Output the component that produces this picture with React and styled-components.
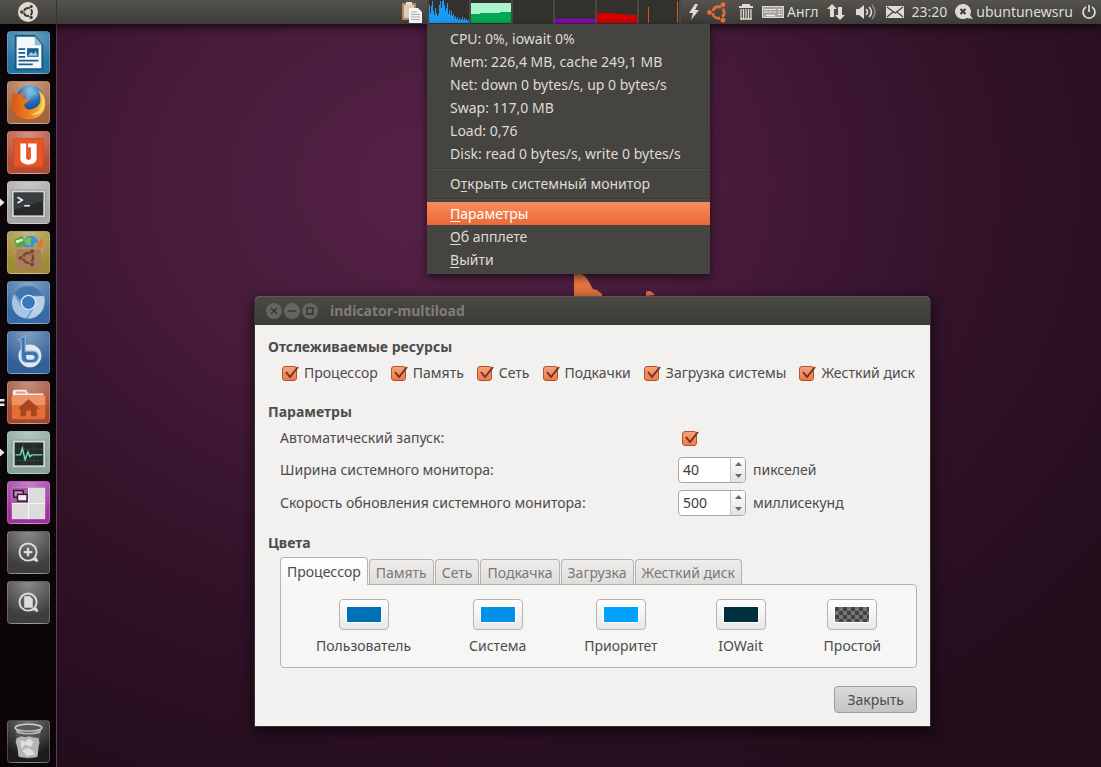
import React, { useState } from "react";
import styled, { createGlobalStyle, css } from "styled-components";

const cpuLoad = [18, 10, 17, 22, 12, 8, 15, 10, 7, 9, 18, 22, 15, 22, 23, 18, 12, 15, 20, 9, 13, 8, 12, 7, 9, 5, 7, 4, 6, 3, 5, 3, 4, 6, 3, 5, 3, 4, 2, 3];

const stats = [
  "CPU: 0%, iowait 0%",
  "Mem: 226,4 MB, cache 249,1 MB",
  "Net: down 0 bytes/s, up 0 bytes/s",
  "Swap: 117,0 MB",
  "Load: 0,76",
  "Disk: read 0 bytes/s, write 0 bytes/s",
];

const resources = ["Процессор", "Память", "Сеть", "Подкачки", "Загрузка системы", "Жесткий диск"];
const tabs = ["Процессор", "Память", "Сеть", "Подкачка", "Загрузка", "Жесткий диск"];

const colors = [
  { id: "user", name: "Пользователь", color: "#0071b5" },
  { id: "system", name: "Система", color: "#0390e8" },
  { id: "nice", name: "Приоритет", color: "#00a1ff" },
  { id: "iowait", name: "IOWait", color: "#002f3d" },
  { id: "idle", name: "Простой", color: "" },
];

/* ---------- launcher drawings ---------- */

const Friends = ({ fill, ring }) => (
  <g>
    <circle cx="12" cy="12" r="6" fill="none" stroke={ring || fill} strokeWidth="3" strokeDasharray="10.4 2.166" strokeDashoffset="-7.366" />
    <circle cx="2.600" cy="12" r="2.500" fill={fill} />
    <circle cx="16.700" cy="3.900" r="2.500" fill={fill} />
    <circle cx="16.700" cy="20.100" r="2.500" fill={fill} />
  </g>
);

const WriterIcon = () => (
  <svg viewBox="0 0 43 43">
    <path d="M8 4h20l8 10v25H8z" fill="#f4f8fa" stroke="#155a86" strokeWidth="2" />
    <path d="M28 4l8 10h-8z" fill="#8db9d2" />
    <path d="M11 18h7M11 22h7M11 26h7M11 30h21M11 34h15" stroke="#195f8d" strokeWidth="1.8" />
    <rect x="20" y="17" width="12" height="9" fill="#195f8d" />
    <path d="M21 25l3-4 3 2 2-3 2 5z" fill="#9fcbe0" />
  </svg>
);

const FirefoxIcon = () => (
  <svg viewBox="0 0 43 43">
    <defs>
      <radialGradient id="globe" cx=".5" cy=".2" r=".8">
        <stop offset="0" stopColor="#8fd0ee" />
        <stop offset=".5" stopColor="#2b6fb8" />
        <stop offset="1" stopColor="#123a7c" />
      </radialGradient>
      <linearGradient id="fox" x1="0" x2="1">
        <stop offset="0" stopColor="#dc5416" />
        <stop offset=".6" stopColor="#ee8a22" />
        <stop offset="1" stopColor="#f8cf45" />
      </linearGradient>
    </defs>
    <circle cx="23" cy="18" r="14.500" fill="url(#globe)" />
    <path d="M22 6c4 0 3 3 7 4s1 4-2 4-5 2-4 4-4 1-3-3z" fill="#7eb7d9" opacity=".6" />
    <path d="M6 10c1 2 3 3 5 3 3-2 6-1 7-1-2 2-3 3-2 5 3 0 6 1 6 2s-3 3-5 4c0 5 5 7 9 5 5-1 8-5 8-9 0-5-1-8-3-11 6 3 8 9 8 15 0 9-7 16-17 16C11 39 4 32 4 23c0-5 0-9 2-13z" fill="url(#fox)" />
    <path d="M33 10c6 5 7 13 3 19-3 5-8 6-13 5 9-1 13-7 13-13 0-5-1-8-3-11z" fill="#fae072" opacity=".8" />
  </svg>
);

const UbuntuOneIcon = () => (
  <svg viewBox="0 0 43 43">
    <rect x="6" y="7" width="31" height="30" rx="1" fill="#e95626" stroke="#c64c28" />
    <path d="M13 12h6v15c0 3 5 3 5 0V16h-3v-4h9v16c0 8-17 8-17 0z" fill="#fff" />
  </svg>
);

const TerminalIcon = () => (
  <svg viewBox="0 0 43 43">
    <rect x="3.500" y="8.500" width="36" height="29" rx="1" fill="#d7d7d7" stroke="#8f8f8f" />
    <rect x="6" y="11" width="31" height="24" fill="#272a2a" />
    <path d="M6 11h31v9L6 29z" fill="#43464a" opacity=".7" />
    <path d="M10 16l5 3-5 3M17 25h6" fill="none" stroke="#f4f4f4" strokeWidth="1.6" />
  </svg>
);

const SoftwareIcon = () => (
  <svg viewBox="0 0 43 43">
    <path d="M6 8l9-4 4 10-10 3z" fill="#59a33d" />
    <path d="M8 9l7-2 1 2-7 3z" fill="#e6efce" />
    <circle cx="24" cy="12" r="8" fill="#4192d4" />
    <path d="M20 6c4-1 6 1 4 3s2 4-1 5-5-2-6-5zM29 11l3 1-2 5-4-1z" fill="#74c152" />
    <path d="M34 7l4 2-5 9h-5z" fill="#e5752c" />
    <path d="M8 16h27v23H8z" fill="#a97d5a" />
    <path d="M6 22l3-6h26l3 6-3 1-1-5H9l-1 5z" fill="#bd946f" />
    <g transform="translate(11 17) scale(.85)"><Friends fill="#77482f" /></g>
  </svg>
);

const ChromiumIcon = () => (
  <svg viewBox="0 0 43 43">
    <circle cx="21.500" cy="21.500" r="17" fill="#6c9ed0" />
    <path d="M21 4.500a17 17 0 0 1 16 10H21c-5 0-7 3-7 6L7 12c3-5 8-7.500 14-7.500z" fill="#4176b1" />
    <path d="M38 15c2 11-4 23-17 23.500l7-13c2-4 1-8-2-10.500z" fill="#b9cfe4" />
    <path d="M6 13l8 13c2 3 5 4 10 4l-5 8C7 37 1 25 6 13z" fill="#a5c5e3" />
    <circle cx="21.500" cy="21.500" r="7.500" fill="#3a78be" stroke="#dce9f4" strokeWidth="1.500" />
  </svg>
);

const BlueIcon = () => (
  <svg viewBox="0 0 43 43">
    <circle cx="23" cy="25" r="12" fill="#e2e7ec" />
    <path d="M11 8l7-4v16h8c8 0 8 12 0 12h-6c-6 0-6-4-6-10V9z" fill="#3c73b0" stroke="#91b5dc" strokeWidth="1.200" />
    <path d="M19 24h6c4 0 4 5 0 5h-3c-3 0-3-1-3-5z" fill="#e2e7ec" />
  </svg>
);

const HomeIcon = () => (
  <svg viewBox="0 0 43 43">
    <path d="M5 10c0-1 1-2 2-2h12l2 4h16v7H5z" fill="#f5eee9" />
    <path d="M8 10h10l1 2H8z" fill="#d8a084" />
    <path d="M4 16c0-1 1-2 2-2h31c1 0 2 1 2 2v20c0 2-1 3-2 3H6c-1 0-2-1-2-3z" fill="#e76c35" />
    <path d="M4 16c0-1 1-2 2-2h31c1 0 2 1 2 2v8H4z" fill="#ef9267" />
    <path d="M21.500 18L33 28h-3v8h-6v-6h-5v6h-6v-8h-3z" fill="#a94521" />
  </svg>
);

const MonitorIcon = () => (
  <svg viewBox="0 0 43 43">
    <rect x="4.500" y="8.500" width="35" height="29" rx="1" fill="#d5d7d6" stroke="#899994" />
    <rect x="7" y="11" width="30" height="24" fill="#232c2b" />
    <path d="M7 18h30M7 30h30M16 11v24M27 11v24" stroke="#33423f" />
    <path d="M8 24h5l2-7 3 12 3-8 2 5 2-2h11" fill="none" stroke="#75dbb9" strokeWidth="1.500" />
  </svg>
);

const WorkspaceIcon = () => (
  <svg viewBox="0 0 43 43">
    <rect x="4" y="6" width="35" height="33" fill="#dcdcdc" />
    <rect x="4" y="6" width="17" height="16" fill="#a95aa5" />
    <path d="M21.500 6v33M4 22.500h35" stroke="#f5f5f5" />
    <rect x="6" y="9" width="10" height="7" fill="#c98bc5" stroke="#32162f" strokeWidth="1.500" />
    <rect x="10" y="13" width="10" height="7" fill="#eee" stroke="#32162f" strokeWidth="1.500" />
  </svg>
);

const LensIcon = ({ file }) => (
  <svg viewBox="0 0 43 43">
    <circle cx="21" cy="21" r="9" fill="none" stroke="#ddd" strokeWidth="2" />
    <path d="M24 29h4l3 2M29 27l2 4" fill="none" stroke="#ddd" strokeWidth="2" />
    {file ? (
      <path d="M17 15h6l3 3v9h-9z" fill="#ddd" />
    ) : (
      <path d="M21 16.500v9M16.500 21h9" stroke="#ddd" strokeWidth="2.400" />
    )}
  </svg>
);

const TrashIcon = () => (
  <svg viewBox="0 0 43 43">
    <path d="M8 7l3 30c0 3 20 3 20 0l4-30z" fill="#555" />
    <path d="M9 18l5-2 4 1 4-1 4 1 6 1 1 5-1 4-1 10c0 2-19 2-20 0l-1-9-2-6z" fill="#b5b5b3" />
    <path d="M13 20l5 2 4-4 5 4-3 5-6-2-4 4zM15 31l6-3 5 3 2 4-8 2z" fill="#dededc" />
    <path d="M8 7c2 7 25 7 27 0l-1 5c-4 3-21 3-25 0z" fill="#b3b3b3" />
    <ellipse cx="21.500" cy="7" rx="14" ry="3.600" fill="#5a5a5a" stroke="#cfcfcf" strokeWidth="1.400" />
  </svg>
);

const launchers = [
  { name: "LibreOffice Writer", bg: "#2474a4", icon: <WriterIcon /> },
  { name: "Firefox", bg: "#a5643f", icon: <FirefoxIcon /> },
  { name: "Ubuntu One", bg: "#b64a32", icon: <UbuntuOneIcon /> },
  { name: "Терминал", bg: "#a6a6a6", icon: <TerminalIcon />, running: 1 },
  { name: "Центр приложений", bg: "#9f8a34", icon: <SoftwareIcon /> },
  { name: "Chromium", bg: "#3769a2", icon: <ChromiumIcon /> },
  { name: "Blueprint", bg: "#315f98", icon: <BlueIcon /> },
  { name: "Домашняя папка", bg: "#a04a31", icon: <HomeIcon />, running: 2 },
  { name: "Системный монитор", bg: "#84a49d", icon: <MonitorIcon />, running: 1 },
  { name: "Рабочие места", bg: "#a032a0", icon: <WorkspaceIcon /> },
  { name: "Приложения", bg: "#3e3e3e", icon: <LensIcon /> },
  { name: "Файлы", bg: "#3e3e3e", icon: <LensIcon file /> },
];

/* ---------- parts ---------- */

const Tick = () => (
  <svg width="20" height="18" viewBox="0 0 20 18">
    <path d="M5 8l4 5 8-10" fill="none" stroke="#6b3622" strokeWidth="2" />
  </svg>
);

const CheckBox = ({ id }) => (
  <Check>
    <input id={id} type="checkbox" defaultChecked />
    <Tick />
  </Check>
);

const Spinner = ({ id, start, step }) => {
  const [value, setValue] = useState(start);

  return (
    <Spin>
      <input id={id} value={value} onChange={(e) => setValue(Number(e.target.value) || 0)} />
      <SpinArrows>
        <button type="button" aria-label="Больше" onClick={() => setValue(value + step)}>
          <svg width="7" height="4" viewBox="0 0 7 4"><path d="M0 4l3.500-4L7 4z" /></svg>
        </button>
        <button type="button" aria-label="Меньше" onClick={() => setValue(value - step)}>
          <svg width="7" height="4" viewBox="0 0 7 4"><path d="M0 0l3.500 4L7 0z" /></svg>
        </button>
      </SpinArrows>
    </Spin>
  );
};

const Graphs = () => (
  <>
    <Graph viewBox="0 0 40 24">
      {cpuLoad.map((v, i) => (
        <rect key={i} x={i} y={23 - v} width="1" height={v} fill="#1a9bf5" />
      ))}
    </Graph>
    <Graph viewBox="0 0 40 24">
      <path d="M0 3h40v20H0z" fill="#aaf5cf" />
      <path d="M0 14l18-1 22-1v11H0z" fill="#00aa55" />
    </Graph>
    <Graph viewBox="0 0 40 24" />
    <Graph viewBox="0 0 40 24"><path d="M0 19h40v4H0z" fill="#8b00c2" /></Graph>
    <Graph viewBox="0 0 40 24"><path d="M0 13h16l4 1 20 1v8H0z" fill="#d40000" /></Graph>
    <Graph viewBox="0 0 40 24">
      <rect x="9" y="7" width="1" height="16" fill="#c8601c" />
      <rect x="38" y="1" width="1" height="22" fill="#c8601c" />
    </Graph>
  </>
);

const App = () => {
  const [tab, setTab] = useState(0);

  return (
    <Screen>
      <GlobalStyle />
      <TopPanel>
        <Dash type="button" aria-label="Ubuntu">
          <svg width="20" height="20" viewBox="0 0 24 24">
            <circle cx="12" cy="12" r="12" fill="#dfdbd2" />
            <g transform="translate(2.400 2.400) scale(.8)"><Friends fill="#3c3b37" /></g>
          </svg>
        </Dash>
        <Tray>
          <svg width="22" height="22" viewBox="0 0 22 22">
            <rect x="1" y="2" width="14" height="17" rx="1" fill="#b48a5e" />
            <rect x="3" y="4" width="10" height="13" fill="#d9cdbb" />
            <rect x="5" y="1" width="6" height="3" fill="#ddd" />
            <path d="M8 7h9l4 4v11H8z" fill="#f3f3f1" />
            <path d="M10 11h6M10 13.500h9M10 16h9M10 18.500h9" stroke="#aaa" />
          </svg>
          <Indicator>
            <Graphs />
            <Menu role="menu">
              {stats.map((s) => (
                <MenuItem key={s} role="menuitem">{s}</MenuItem>
              ))}
              <Separator />
              <MenuItem role="menuitem">О<u>т</u>крыть системный монитор</MenuItem>
              <Separator />
              <MenuItem role="menuitem" $active><u>П</u>араметры</MenuItem>
              <MenuItem role="menuitem"><u>О</u>б апплете</MenuItem>
              <MenuItem role="menuitem"><u>В</u>ыйти</MenuItem>
            </Menu>
          </Indicator>
          <svg width="10" height="18" viewBox="0 0 10 18">
            <path d="M6 1L0 10h4l-2 7 8-10H6l3-6z" fill="#dfdbd2" />
          </svg>
          <svg width="23" height="23" viewBox="0 0 24 24"><Friends fill="#f06a30" ring="#d9703c" /></svg>
          <svg width="16" height="18" viewBox="0 0 16 18">
            <path d="M1 4h14M4 2h8" stroke="#dfdbd2" strokeWidth="2" />
            <path d="M3 6v10M5.500 6v10M8 6v10M10.500 6v10M13 6v10M2 16h12" stroke="#dfdbd2" strokeWidth="1.300" />
          </svg>
          <TrayText>
            <svg width="22" height="14" viewBox="0 0 22 14">
              <rect x=".5" y="1.500" width="21" height="11" fill="#a5a39d" stroke="#dfdbd2" />
              <path d="M2 4.500h12M2 7h12M16 4.500h4M16 7h4M16 9.500h4" stroke="#f3f0ea" strokeDasharray="2 .6" />
              <path d="M4 10.500h9" stroke="#f3f0ea" strokeWidth="1.500" />
            </svg>
            Англ
          </TrayText>
          <svg width="21" height="18" viewBox="0 0 21 18">
            <path d="M5 1L0 6h3v8h4V6h3zM13 17l5-5h-3V4h-4v8H8z" fill="#dfdbd2" />
          </svg>
          <svg width="22" height="18" viewBox="0 0 22 18">
            <path d="M0 6h3l5-4v14l-5-4H0z" fill="#dfdbd2" />
            <path d="M10 6q3 3 0 6M13 4q5 5 0 10" fill="none" stroke="#dfdbd2" strokeWidth="1.600" />
            <path d="M16 2q6 7 0 14" fill="none" stroke="#8b8881" strokeWidth="1.600" />
          </svg>
          <svg width="18" height="14" viewBox="0 0 18 14">
            <rect y="1" width="18" height="12" fill="#dfdbd2" />
            <path d="M1 2l8 6 8-6M1 12l6-5M17 12l-6-5" fill="none" stroke="#45443f" strokeWidth="1.300" />
          </svg>
          <TrayText>23:20</TrayText>
          <TrayText>
            <svg width="18" height="16" viewBox="0 0 18 16">
              <path d="M8 0a8 7.500 0 1 0 4 14l6 1-3-4A8 7.500 0 0 0 8 0z" fill="#dfdbd2" />
              <path d="M5.500 5l5 5M10.500 5l-5 5" stroke="#3c3b37" strokeWidth="2" />
            </svg>
            ubuntunewsru
          </TrayText>
          <svg width="16" height="16" viewBox="0 0 16 16">
            <path d="M5 3a6 6 0 1 0 6 0M8 1v7" fill="none" stroke="#dfdbd2" strokeWidth="1.700" />
          </svg>
        </Tray>
      </TopPanel>

      <Workspace>
        <Launcher>
          {launchers.map((l) => (
            <Tile key={l.name} type="button" aria-label={l.name} $bg={l.bg} $running={l.running}>
              {l.icon}
            </Tile>
          ))}
          <Tile type="button" aria-label="Корзина" $bg="#1c1c1c" $last>
            <TrashIcon />
          </Tile>
        </Launcher>

        <Desktop>
          <Bird width="90" height="48" viewBox="0 0 90 48">
            <path d="M0 0c9 1 13 5 16 12 3 4 1 5 7 6l5 4v26H0zM72 20q4-3 9 3l-9 1z" fill="#e57441" />
          </Bird>
          <Dialog aria-labelledby="dialog-title">
            <TitleBar>
              <WindowButton type="button" aria-label="Закрыть окно">
                <svg viewBox="0 0 16 16"><path d="M5 5l6 6M11 5l-6 6" /></svg>
              </WindowButton>
              <WindowButton type="button" aria-label="Свернуть">
                <svg viewBox="0 0 16 16"><path d="M4 8h8" /></svg>
              </WindowButton>
              <WindowButton type="button" aria-label="Развернуть">
                <svg viewBox="0 0 16 16"><path d="M5 5h6v6H5z" /></svg>
              </WindowButton>
              <Title id="dialog-title">indicator-multiload</Title>
            </TitleBar>
            <Body>
              <Heading>Отслеживаемые ресурсы</Heading>
              <Resources>
                {resources.map((r, i) => (
                  <ResourceLabel key={r} htmlFor={"res" + i}>
                    <CheckBox id={"res" + i} />
                    {r}
                  </ResourceLabel>
                ))}
              </Resources>

              <Heading>Параметры</Heading>
              <Options>
                <label htmlFor="autostart">Автоматический запуск:</label>
                <CheckCell><CheckBox id="autostart" /></CheckCell>
                <span />
                <label htmlFor="width">Ширина системного монитора:</label>
                <Spinner id="width" start={40} step={1} />
                <span>пикселей</span>
                <label htmlFor="speed">Скорость обновления системного монитора:</label>
                <Spinner id="speed" start={500} step={100} />
                <span>миллисекунд</span>
              </Options>

              <Heading>Цвета</Heading>
              <TabList role="tablist">
                {tabs.map((t, i) => (
                  <Tab key={t} type="button" role="tab" aria-selected={i === tab} $active={i === tab} onClick={() => setTab(i)}>
                    {t}
                  </Tab>
                ))}
              </TabList>
              <TabPanel role="tabpanel">
                {colors.map((c) => (
                  <ColorField key={c.id}>
                    <ColorButton id={c.id} type="button">
                      <Swatch $color={c.color} />
                    </ColorButton>
                    <label htmlFor={c.id}>{c.name}</label>
                  </ColorField>
                ))}
              </TabPanel>

              <Actions>
                <CloseButton type="button">Закрыть</CloseButton>
              </Actions>
            </Body>
          </Dialog>
        </Desktop>
      </Workspace>
    </Screen>
  );
};

const GlobalStyle = createGlobalStyle`
  * {
    box-sizing: border-box;
  }

  body {
    margin: 0;
  }

  body, button, input {
    font-family: "Noto Sans", "Open Sans", sans-serif;
    font-size: 14px;
    line-height: 20px;
  }
`;

const Screen = styled.div`
  display: flex;
  flex-direction: column;
  min-height: 100vh;
  background: radial-gradient(ellipse 75% 85% at 40% 24%, #562246 0%, #471b3a 35%, #321229 65%, #230d1b 100%);
`;

const TopPanel = styled.header`
  display: flex;
  align-items: center;
  justify-content: space-between;
  height: 24px;
  background: linear-gradient(#54534e, #3c3b37);
  box-shadow: 0 2px 10px rgba(0, 0, 0, 0.8);
  color: #dfdbd2;
  position: relative;
  z-index: 2;
`;

const Dash = styled.button`
  display: flex;
  align-items: center;
  justify-content: center;
  width: 57px;
  height: 24px;
  padding: 0;
  border: 0;
  border-right: 1px solid #34332f;
  background: none;
`;

const Tray = styled.div`
  display: flex;
  align-items: center;
  gap: 8px;
  padding-right: 4px;

  & > svg {
    flex: none;
  }

  & > svg:first-child {
    margin-right: -4px;
  }
`;

const TrayText = styled.span`
  display: flex;
  align-items: center;
  gap: 3px;
`;

const Indicator = styled.div`
  position: relative;
  display: flex;
  gap: 2px;
  height: 24px;
  padding: 0 2px;
  background: #494843;
`;

const Graph = styled.svg`
  width: 40px;
  height: 24px;
  background: #32312d;
  shape-rendering: crispEdges;
`;

const Menu = styled.ul`
  position: absolute;
  top: 100%;
  left: 0;
  width: 283px;
  margin: 0;
  padding: 3px 0;
  list-style: none;
  background: #454440;
  box-shadow: 0 3px 8px rgba(0, 0, 0, 0.6);
`;

const MenuItem = styled.li`
  height: 23px;
  padding: 2px 23px 1px;
  white-space: nowrap;

  u {
    text-underline-offset: 2px;
  }

  ${(p) =>
    p.$active &&
    css`
      color: #fff;
      background: linear-gradient(#f98c5e, #ea6a36);
    `}
`;

const Separator = styled.li`
  height: 7px;
  padding-top: 3px;

  &::before {
    content: "";
    display: block;
    border-top: 1px solid #3f3e3a;
    border-bottom: 1px solid #4d4c47;
  }
`;

const Workspace = styled.div`
  display: flex;
  flex: 1;
`;

const Launcher = styled.nav`
  display: flex;
  flex-direction: column;
  align-items: center;
  gap: 7px;
  width: 57px;
  padding: 7px 0 4px;
  background: #0b0409;
  border-right: 1px solid #57404f;
`;

const Tile = styled.button`
  position: relative;
  flex: none;
  width: 43px;
  height: 43px;
  padding: 0;
  border: 1px solid rgba(255, 255, 255, 0.2);
  border-radius: 4px;
  background: radial-gradient(circle at 50% 0, rgba(255, 255, 255, 0.4), transparent 75%) ${(p) => p.$bg};
  margin-top: ${(p) => (p.$last ? "auto" : "0")};

  svg {
    display: block;
    width: 41px;
    height: 41px;
  }

  ${(p) =>
    p.$running &&
    css`
      &::before {
        content: "";
        position: absolute;
        left: -8px;
        top: 16px;
        width: 5px;
        height: 9px;
        background: #e8e8e8;
        clip-path: ${p.$running === 1
          ? "polygon(0 0, 100% 50%, 0 100%)"
          : "polygon(0 10%, 100% 10%, 100% 40%, 0 40%, 0 60%, 100% 60%, 100% 90%, 0 90%)"};
      }
    `}
`;

const Desktop = styled.main`
  position: relative;
  flex: 1;
`;

const Bird = styled.svg`
  position: absolute;
  left: 517px;
  top: 248px;
`;

const Dialog = styled.section`
  position: absolute;
  left: 197px;
  top: 272px;
  width: 677px;
  border: 1px solid #33322e;
  border-top: 0;
  border-radius: 6px 6px 0 0;
  background: #f2f1f0;
  color: #4c4c4c;
  box-shadow: 0 4px 14px rgba(0, 0, 0, 0.7);
`;

const TitleBar = styled.div`
  display: flex;
  align-items: center;
  gap: 2px;
  height: 29px;
  padding: 0 11px;
  border-radius: 5px 5px 0 0;
  border-top: 1px solid #5a5955;
  background: linear-gradient(#494843, #3c3b37);
`;

const WindowButton = styled.button`
  width: 16px;
  height: 16px;
  padding: 0;
  border: 0;
  border-radius: 50%;
  background: #66645e;

  svg {
    display: block;
    fill: none;
    stroke: #35342f;
    stroke-width: 1.4;
  }
`;

const Title = styled.h1`
  margin: 0 0 0 10px;
  font-size: 14px;
  line-height: 20px;
  color: #807d78;
`;

const Body = styled.div`
  padding: 12px 13px 13px;
`;

const Heading = styled.h2`
  margin: 0;
  font-size: 14px;
  line-height: 20px;
`;

const Resources = styled.div`
  display: flex;
  justify-content: space-between;
  padding: 6px 2px 19px 13px;
`;

const ResourceLabel = styled.label`
  display: flex;
  align-items: center;
  gap: 3px;
  white-space: nowrap;
`;

const Check = styled.span`
  display: grid;
  width: 20px;
  height: 18px;

  & > * {
    grid-area: 1 / 1;
  }

  input {
    appearance: none;
    width: 15px;
    height: 15px;
    margin: 2px 0 0 1px;
    border: 1px solid #b5502c;
    border-radius: 3px;
    background: linear-gradient(#f7a17c, #ee7b4c);
  }

  svg {
    pointer-events: none;
  }

  input:not(:checked) + svg {
    visibility: hidden;
  }
`;

const Options = styled.div`
  display: grid;
  grid-template-columns: 1fr 68px 164px;
  grid-template-rows: 24px 26px 26px;
  align-items: center;
  gap: 7px;
  padding: 4px 0 17px 12px;
`;

const CheckCell = styled.div`
  padding-left: 3px;
`;

const Spin = styled.div`
  display: flex;
  height: 26px;
  border: 1px solid #aba6a1;
  border-radius: 4px;
  background: #fff;
  overflow: hidden;

  input {
    width: 51px;
    padding: 0 4px;
    border: 0;
    outline: 0;
    background: none;
    color: #3c3c3c;
  }
`;

const SpinArrows = styled.div`
  display: flex;
  flex-direction: column;
  flex: 1;
  border-left: 1px solid #c8c4c0;
  background: linear-gradient(#fff, #e4e2e0);

  button {
    display: flex;
    flex: 1;
    align-items: center;
    justify-content: center;
    padding: 0;
    border: 0;
    background: none;
    fill: #6a6a6a;
  }
`;

const TabList = styled.div`
  display: flex;
  align-items: flex-end;
  gap: 1px;
  height: 31px;
  margin-left: 12px;
`;

const Tab = styled.button`
  height: 25px;
  padding: 1px 6px 0;
  border: 1px solid #b8b3ae;
  border-bottom: 0;
  border-radius: 4px 4px 0 0;
  background: linear-gradient(#efedec, #dfdddb);
  color: #7b7875;
  white-space: nowrap;

  ${(p) =>
    p.$active &&
    css`
      height: 28px;
      margin-bottom: -1px;
      background: linear-gradient(#fff, #f6f6f5);
      color: #4c4c4c;
      z-index: 1;
    `}
`;

const TabPanel = styled.div`
  display: flex;
  justify-content: space-around;
  margin-left: 12px;
  padding: 14px 6px 11px;
  border: 1px solid #b8b3ae;
  border-radius: 0 4px 4px 4px;
  background: #f6f6f5;
`;

const ColorField = styled.div`
  display: flex;
  flex-direction: column;
  align-items: center;
  gap: 6px;
`;

const ColorButton = styled.button`
  width: 50px;
  height: 31px;
  padding: 6px;
  border: 1px solid #b8b3ae;
  border-radius: 4px;
  background: linear-gradient(#fefefe, #e9e7e6);
`;

const Swatch = styled.span`
  display: block;
  height: 17px;
  border: 1px solid #fff;
  background: ${(p) => p.$color || "repeating-conic-gradient(#777 0 25%, #444 0 50%) 0 0 / 8px 8px"};
`;

const Actions = styled.div`
  display: flex;
  justify-content: flex-end;
  padding-top: 18px;
`;

const CloseButton = styled.button`
  height: 27px;
  padding: 0 12px;
  border: 1px solid #a09c98;
  border-radius: 4px;
  background: linear-gradient(#dcdad9, #c6c4c3);
  color: #4c4c4c;
`;

export default App;
